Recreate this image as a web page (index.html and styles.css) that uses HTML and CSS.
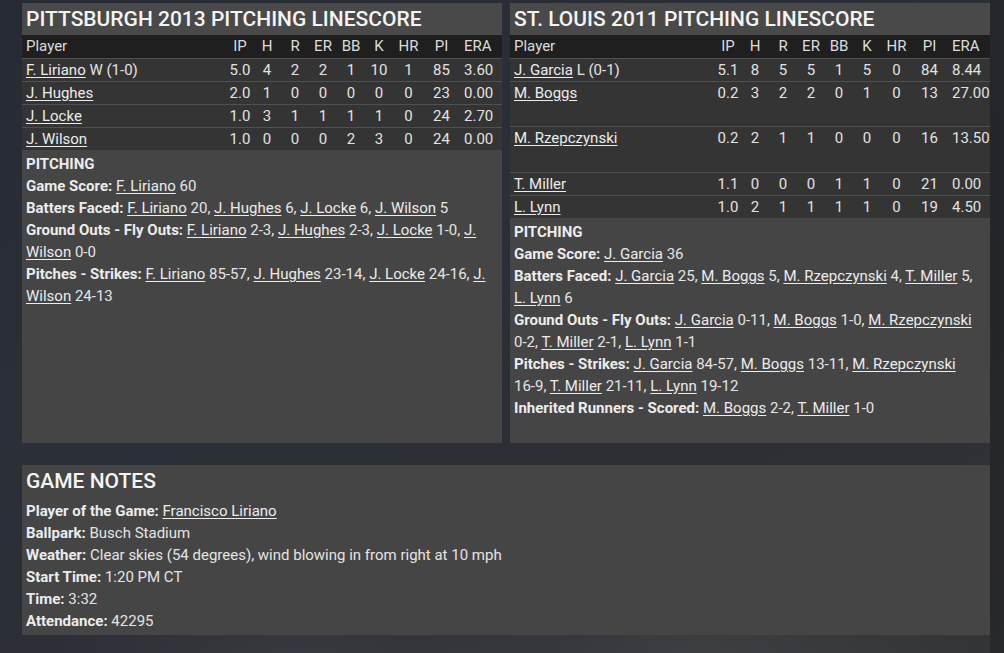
FILE: index.html
```html
<!DOCTYPE html>
<html>
<head>
<meta charset="utf-8">
<link rel="stylesheet" href="styles.css">
</head>
<body>
<div class="page">
  <div class="top">
    <section class="panel">
      <h2 class="panel-title">PITTSBURGH 2013 PITCHING LINESCORE</h2>
      <table class="line">
        <colgroup>
          <col><col class="c-ip"><col class="c-h"><col class="c-r"><col class="c-er"><col class="c-bb"><col class="c-k"><col class="c-hr"><col class="c-pi"><col class="c-era">
        </colgroup>
        <thead>
          <tr><th class="name">Player</th><th>IP</th><th>H</th><th>R</th><th>ER</th><th>BB</th><th>K</th><th>HR</th><th>PI</th><th class="era">ERA</th></tr>
        </thead>
        <tbody>
          <tr><td class="name"><a href="#">F. Liriano</a> W (1-0)</td><td>5.0</td><td>4</td><td>2</td><td>2</td><td>1</td><td>10</td><td>1</td><td>85</td><td class="era">3.60</td></tr>
          <tr><td class="name"><a href="#">J. Hughes</a></td><td>2.0</td><td>1</td><td>0</td><td>0</td><td>0</td><td>0</td><td>0</td><td>23</td><td class="era">0.00</td></tr>
          <tr><td class="name"><a href="#">J. Locke</a></td><td>1.0</td><td>3</td><td>1</td><td>1</td><td>1</td><td>1</td><td>0</td><td>24</td><td class="era">2.70</td></tr>
          <tr><td class="name"><a href="#">J. Wilson</a></td><td>1.0</td><td>0</td><td>0</td><td>0</td><td>2</td><td>3</td><td>0</td><td>24</td><td class="era">0.00</td></tr>
        </tbody>
      </table>
      <div class="notes">
        <div class="notes-head">PITCHING</div>
        <p><b>Game Score:</b> <a href="#">F. Liriano</a> 60</p>
        <p><b>Batters Faced:</b> <a href="#">F. Liriano</a> 20, <a href="#">J. Hughes</a> 6, <a href="#">J. Locke</a> 6, <a href="#">J. Wilson</a> 5</p>
        <p><b>Ground Outs - Fly Outs:</b> <a href="#">F. Liriano</a> <span class="nb">2-3,</span> <a href="#">J. Hughes</a> <span class="nb">2-3,</span> <a href="#">J. Locke</a> <span class="nb">1-0,</span> <a href="#">J. Wilson</a> <span class="nb">0-0</span></p>
        <p><b>Pitches - Strikes:</b> <a href="#">F. Liriano</a> <span class="nb">85-57,</span> <a href="#">J. Hughes</a> <span class="nb">23-14,</span> <a href="#">J. Locke</a> <span class="nb">24-16,</span> <a href="#">J. Wilson</a> <span class="nb">24-13</span></p>
      </div>
    </section>
    <section class="panel">
      <h2 class="panel-title">ST. LOUIS 2011 PITCHING LINESCORE</h2>
      <table class="line">
        <colgroup>
          <col><col class="c-ip"><col class="c-h"><col class="c-r"><col class="c-er"><col class="c-bb"><col class="c-k"><col class="c-hr"><col class="c-pi"><col class="c-era">
        </colgroup>
        <thead>
          <tr><th class="name">Player</th><th>IP</th><th>H</th><th>R</th><th>ER</th><th>BB</th><th>K</th><th>HR</th><th>PI</th><th class="era">ERA</th></tr>
        </thead>
        <tbody>
          <tr><td class="name"><a href="#">J. Garcia</a> L (0-1)</td><td>5.1</td><td>8</td><td>5</td><td>5</td><td>1</td><td>5</td><td>0</td><td>84</td><td class="era">8.44</td></tr>
          <tr class="tall-a"><td class="name"><a href="#">M. Boggs</a></td><td>0.2</td><td>3</td><td>2</td><td>2</td><td>0</td><td>1</td><td>0</td><td>13</td><td class="era">27.00</td></tr>
          <tr class="tall-b"><td class="name"><a href="#">M. Rzepczynski</a></td><td>0.2</td><td>2</td><td>1</td><td>1</td><td>0</td><td>0</td><td>0</td><td>16</td><td class="era">13.50</td></tr>
          <tr><td class="name"><a href="#">T. Miller</a></td><td>1.1</td><td>0</td><td>0</td><td>0</td><td>1</td><td>1</td><td>0</td><td>21</td><td class="era">0.00</td></tr>
          <tr><td class="name"><a href="#">L. Lynn</a></td><td>1.0</td><td>2</td><td>1</td><td>1</td><td>1</td><td>1</td><td>0</td><td>19</td><td class="era">4.50</td></tr>
        </tbody>
      </table>
      <div class="notes">
        <div class="notes-head">PITCHING</div>
        <p><b>Game Score:</b> <a href="#">J. Garcia</a> 36</p>
        <p><b>Batters Faced:</b> <a href="#">J. Garcia</a> 25, <a href="#">M. Boggs</a> 5, <a href="#">M. Rzepczynski</a> 4, <a href="#">T. Miller</a> 5, <a href="#">L. Lynn</a> 6</p>
        <p><b>Ground Outs - Fly Outs:</b> <a href="#">J. Garcia</a> <span class="nb">0-11,</span> <a href="#">M. Boggs</a> <span class="nb">1-0,</span> <a href="#">M. Rzepczynski</a> <span class="nb">0-2,</span> <a href="#">T. Miller</a> <span class="nb">2-1,</span> <a href="#">L. Lynn</a> <span class="nb">1-1</span></p>
        <p><b>Pitches - Strikes:</b> <a href="#">J. Garcia</a> <span class="nb">84-57,</span> <a href="#">M. Boggs</a> <span class="nb">13-11,</span> <a href="#">M. Rzepczynski</a> <span class="nb">16-9,</span> <a href="#">T. Miller</a> <span class="nb">21-11,</span> <a href="#">L. Lynn</a> <span class="nb">19-12</span></p>
        <p><b>Inherited Runners - Scored:</b> <a href="#">M. Boggs</a> <span class="nb">2-2,</span> <a href="#">T. Miller</a> <span class="nb">1-0</span></p>
      </div>
    </section>
  </div>
  <section class="panel game">
    <h2 class="panel-title plain">GAME NOTES</h2>
    <div class="notes game-notes">
      <p><b>Player of the Game:</b> <a href="#">Francisco Liriano</a></p>
      <p><b>Ballpark:</b> Busch Stadium</p>
      <p><b>Weather:</b> Clear skies (54 degrees), wind blowing in from right at 10 mph</p>
      <p><b>Start Time:</b> 1:20 PM CT</p>
      <p><b>Time:</b> 3:32</p>
      <p><b>Attendance:</b> 42295</p>
    </div>
  </section>
</div>
</body>
</html>
```

FILE: styles.css
```css
html, body {
  margin: 0;
  height: 100%;
}
body {
  font-family: Roboto, "Liberation Sans", sans-serif;
  color: #e4e4e4;
  background-color: #2a2d33;
  background-image:
    linear-gradient(to right, transparent 990px, rgba(20, 20, 20, 0.35) 990px),
    radial-gradient(ellipse 300px 120px at 700px 653px, rgba(120, 120, 125, 0.18), transparent),
    radial-gradient(ellipse 260px 100px at 300px 660px, rgba(110, 110, 120, 0.16), transparent),
    linear-gradient(155deg, #262b33 0%, #2b3038 40%, #2c2f34 70%, #333437 100%);
  overflow: hidden;
}
.page {
  padding: 3px 14px 0 22px;
}
.top {
  display: grid;
  grid-template-columns: 480px 480px;
  column-gap: 8px;
}
.panel {
  background: #454545;
  min-height: 440px;
  display: flex;
  flex-direction: column;
}
.panel.game {
  min-height: 0;
  margin-top: 22px;
}
.panel-title {
  margin: 0;
  padding: 0 4px;
  font-size: 21px;
  line-height: 32px;
  font-weight: 500;
  color: #f4f4f4;
  background: #494949;
  white-space: nowrap;
}
.panel-title.plain {
  background: transparent;
}
.line {
  width: 480px;
  table-layout: fixed;
  border-collapse: separate;
  border-spacing: 0;
  font-size: 15px;
}
.c-ip { width: 26px; }
.c-h { width: 28px; }
.c-r { width: 28px; }
.c-er { width: 28px; }
.c-bb { width: 28px; }
.c-k { width: 28px; }
.c-hr { width: 31px; }
.c-pi { width: 35px; }
.c-era { width: 43px; }
.line th, .line td {
  padding: 0;
  text-align: center;
  font-weight: 400;
  line-height: 22px;
  height: 22px;
  vertical-align: top;
  white-space: nowrap;
}
.line th {
  background: #1f1f1f;
  color: #dcdcdc;
  height: 23px;
  line-height: 23px;
}
.line td {
  background: #343434;
  border-top: 1px solid #505050;
  color: #e2e2e2;
}
.line .name {
  text-align: left;
  padding-left: 4px;
}
.line .era {
  text-align: left;
  padding-left: 5px;
}
.line tr.tall-a td { height: 44px; }
.line tr.tall-b td { height: 45px; }
a {
  color: #ececec;
  text-decoration: underline;
  text-underline-offset: 2px;
}
.nb {
  white-space: nowrap;
}
.notes {
  padding: 3px 4px 3px 4px;
  font-size: 15px;
  line-height: 22px;
}
.notes-head {
  font-weight: 700;
  color: #ececec;
}
.notes p {
  margin: 0;
}
.notes b {
  font-weight: 700;
  color: #ececec;
}
.game-notes {
  padding-top: 3px;
}
```
